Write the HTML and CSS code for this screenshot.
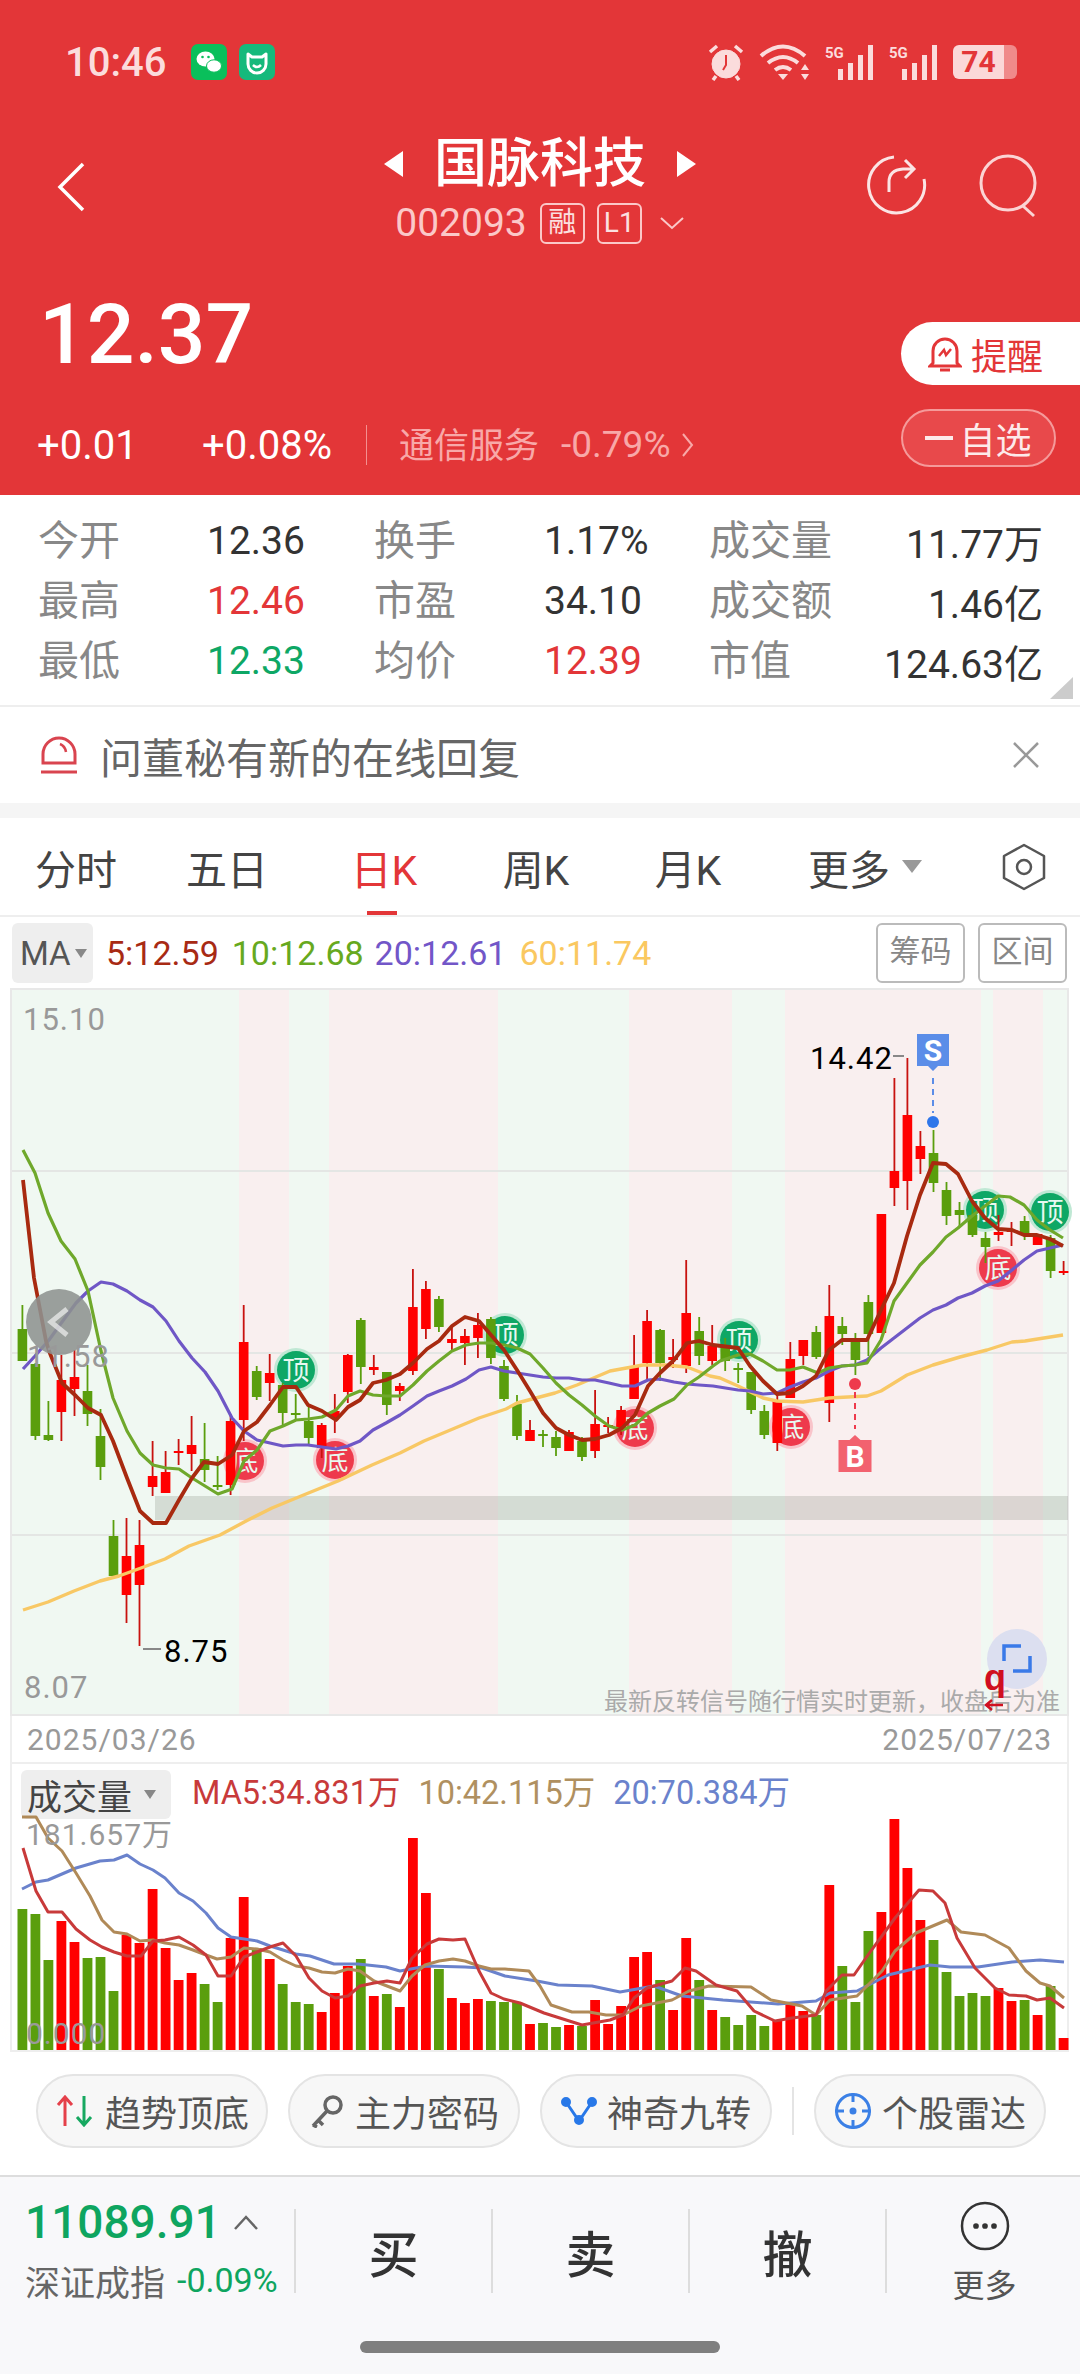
FILE: index.html
```html
<!DOCTYPE html>
<html>
	<head>
		<meta charset="utf-8" />
		<title>国脉科技</title>
		<link rel="stylesheet" href="styles.css">
	</head>
	<body>
		<div class="page">
			<div class="top">
				<div class="status">
					<span class="clock">10:46</span>
					<svg class="app-ico" width="36" height="36" viewBox="0 0 36 36"><rect width="36" height="36" rx="7" fill="#0abf5b"/><ellipse cx="14.5" cy="15" rx="9" ry="7.5" fill="#fff"/><ellipse cx="23" cy="22" rx="7.5" ry="6.2" fill="#fff" stroke="#0abf5b"/><circle cx="11.5" cy="13" r="1.3" fill="#0abf5b"/><circle cx="17.5" cy="13" r="1.3" fill="#0abf5b"/></svg>
					<svg class="app-ico" width="36" height="36" viewBox="0 0 36 36"><rect width="36" height="36" rx="7" fill="#16b97c"/><path d="M9 10l4 3h10l4-3v10a9 9 0 0 1-18 0z" fill="none" stroke="#fff" stroke-width="3" stroke-linejoin="round"/><path d="M14 21q4 4 8 0" fill="none" stroke="#fff" stroke-width="2.5"/></svg>
					<div class="status-right">
						<svg width="38" height="38" viewBox="0 0 38 38" fill="none" stroke="#fbdcdc"><circle cx="19" cy="21" r="14" fill="#fbdcdc"/><path d="M19 12v10l-3 5" stroke="#e33638" stroke-width="2"/><path d="M3 9l7-6M35 9l-7-6M9 33l-3 4M29 33l3 4" stroke-width="3.5"/></svg>
						<svg width="52" height="36" viewBox="0 0 52 36" fill="none" stroke="#fbdcdc" stroke-width="4"><path d="M2 12q22-19 44 0M9 19q15-12 30 0M16 26q8-6 16 0"/><path d="M24 36l-5-6h10z" fill="#fbdcdc" stroke="none"/><path d="M46 20l-4 6h8zM46 36l-4-6h8z" fill="#fbdcdc" stroke="none"/></svg>
						<svg class="sig" width="50" height="36" viewBox="0 0 50 36"><text class="sig-text" x="0" y="14">5G</text><path d="M13 25h5v11h-5zM23 19h5v17h-5zM33 11h5v25h-5zM43 1h5v35h-5z" fill="#fbdcdc"/></svg>
						<svg class="sig" width="50" height="36" viewBox="0 0 50 36"><text class="sig-text" x="0" y="14">5G</text><path d="M13 25h5v11h-5zM23 19h5v17h-5zM33 11h5v25h-5zM43 1h5v35h-5z" fill="#fbdcdc"/></svg>
						<div class="battery"><span class="battery-fill">74</span><i class="battery-rest"></i></div>
					</div>
				</div>
				<div class="nav">
					<div>
						<svg class="back" width="30" height="50" viewBox="0 0 30 50" fill="none" stroke="#fff" stroke-width="3.5"><path d="M27 2L4 25l23 23"/></svg>
					</div>
					<div class="title-box">
						<div class="title-line"><i class="tri-left"></i><span class="title">国脉科技</span><i class="tri-right"></i></div>
						<div class="code-line">
							<span class="code">002093</span>
							<span class="tag">融</span>
							<span class="tag tag-wide">L1</span>
							<svg width="26" height="14" viewBox="0 0 26 14" fill="none" stroke="#fbc8c8" stroke-width="2"><path d="M2 2l11 10L24 2"/></svg>
						</div>
					</div>
					<div class="nav-icons">
						<svg width="60" height="62" viewBox="0 0 60 62" fill="none" stroke="#fbe4e4" stroke-width="3"><path d="M27 3a28 28 0 1 0 30 22"/><path d="M22 38V28q0-12 14-13h10M38 6l9 9-9 9"/></svg>
						<svg width="60" height="64" viewBox="0 0 60 64" fill="none" stroke="#fbd4d4" stroke-width="3"><circle cx="29" cy="29" r="27"/><path d="M44 52l11 10"/></svg>
					</div>
				</div>
				<div class="quote">
					<div>
						<div class="price">12.37</div>
						<div class="change">
							<span class="change-a">+0.01</span>
							<span class="change-b">+0.08%</span>
							<i class="change-sep"></i>
							<span class="sector">通信服务</span>
							<span class="sector-pct">-0.79%</span>
							<svg width="13" height="26" viewBox="0 0 13 26" fill="none" stroke="#f8a8a8" stroke-width="2"><path d="M2 2l9 11-9 11"/></svg>
						</div>
					</div>
					<div class="quote-btns">
						<div class="remind">
							<svg width="34" height="36" viewBox="0 0 34 36" fill="none" stroke="#e33638" stroke-width="3"><path d="M5 27V15a12 12 0 0 1 24 0v12l3 3H2z"/><path d="M12 34h10" stroke-width="3"/><path d="M11 20l5-6 2 5 5-6" stroke-width="2.5"/></svg>
							<span>提醒</span>
						</div>
						<div class="watch"><i class="watch-dash"></i>自选</div>
					</div>
				</div>
			</div>

			<div class="stats">
				<span class="st-label">今开</span><span class="st-val">12.36</span>
				<span class="st-label">换手</span><span class="st-val">1.17%</span>
				<span class="st-label">成交量</span><span class="st-val st-end">11.77万</span>
				<span class="st-label">最高</span><span class="st-val up">12.46</span>
				<span class="st-label">市盈</span><span class="st-val">34.10</span>
				<span class="st-label">成交额</span><span class="st-val st-end">1.46亿</span>
				<span class="st-label">最低</span><span class="st-val down">12.33</span>
				<span class="st-label">均价</span><span class="st-val up">12.39</span>
				<span class="st-label">市值</span><span class="st-val st-end">124.63亿</span>
				<i class="corner"></i>
			</div>

			<div class="notice">
				<svg width="38" height="40" viewBox="0 0 38 40" fill="none" stroke="#d9444f" stroke-width="3"><path d="M3 28V19a16 16 0 0 1 32 0v9z"/><path d="M1 37h36"/><path d="M20 9q5 2 6 8" stroke-width="2.5"/></svg>
				<span class="notice-text">问董秘有新的在线回复</span>
				<svg width="28" height="28" viewBox="0 0 28 28" fill="none" stroke="#999" stroke-width="2.5"><path d="M2 2l24 24M26 2L2 26"/></svg>
			</div>
			<div class="gap"></div>

			<div class="tabs">
				<span class="tab">分时</span>
				<span class="tab">五日</span>
				<span class="tab tab-on">日K</span>
				<span class="tab">周K</span>
				<span class="tab">月K</span>
				<span class="tab">更多<i class="tab-tri"></i></span>
				<span class="tab tab-icon">
					<svg width="44" height="48" viewBox="0 0 44 48" fill="none" stroke="#555" stroke-width="2.5"><path d="M22 2l20 11v22L22 46 2 35V13z" stroke-linejoin="round"/><circle cx="22" cy="24" r="7"/></svg>
				</span>
			</div>

			<div class="ma-row">
				<div class="ma-box">MA<i class="mini-tri"></i></div>
				<span class="ma5">5:12.59</span>
				<span class="ma10">10:12.68</span>
				<span class="ma20">20:12.61</span>
				<span class="ma60">60:11.74</span>
				<span class="ma-btn ma-btn-first">筹码</span>
				<span class="ma-btn">区间</span>
			</div>

			<div class="kline" id="kline"></div>

			<div class="dates">
				<span>2025/03/26</span>
				<span>2025/07/23</span>
			</div>

			<div class="vol-head">
				<div class="vol-box">成交量<i class="mini-tri"></i></div>
				<span class="v5">MA5:34.831万</span>
				<span class="v10">10:42.115万</span>
				<span class="v20">20:70.384万</span>
			</div>
			<div class="vol" id="vol"></div>

			<div class="tools">
				<div class="pill">
					<svg width="40" height="32" viewBox="0 0 40 32" fill="none" stroke-width="3"><path d="M10 31V3M3 10l7-8 7 8" stroke="#e5404a"/><path d="M29 1v28M22 22l7 8 7-8" stroke="#16a860"/></svg>
					<span>趋势顶底</span>
				</div>
				<div class="pill">
					<svg width="36" height="34" viewBox="0 0 36 34" fill="none" stroke="#666" stroke-width="3.5"><circle cx="24" cy="11" r="8"/><path d="M18 17L4 32M9 26l5 5M4 31l4 2"/></svg>
					<span>主力密码</span>
				</div>
				<div class="pill">
					<svg width="36" height="30" viewBox="0 0 36 30" fill="#2878e8" stroke="#2878e8" stroke-width="3"><path d="M5 6l13 19L31 6" fill="none"/><circle cx="5" cy="6" r="3.5"/><circle cx="31" cy="6" r="3.5"/><circle cx="18" cy="24" r="3.5"/></svg>
					<span>神奇九转</span>
				</div>
				<i class="tools-sep"></i>
				<div class="pill">
					<svg width="38" height="38" viewBox="0 0 38 38" fill="none" stroke="#3b80e6" stroke-width="3"><circle cx="19" cy="19" r="16.5"/><path d="M19 1v9M19 28v9M1 19h9M28 19h9"/><circle cx="19" cy="19" r="2" fill="#3b80e6"/></svg>
					<span>个股雷达</span>
				</div>
			</div>

			<div class="bottom">
				<div class="bottom-row">
					<div class="index">
						<div class="index-top">
							<span class="index-num">11089.91</span>
							<svg width="26" height="15" viewBox="0 0 26 15" fill="none" stroke="#666" stroke-width="2.5"><path d="M2 14L13 2l11 12"/></svg>
						</div>
						<div class="index-sub"><span>深证成指</span><span class="index-pct">-0.09%</span></div>
					</div>
					<div class="trade">买</div>
					<div class="trade">卖</div>
					<div class="trade">撤</div>
					<div class="trade more">
						<svg width="50" height="50" viewBox="0 0 50 50" fill="none" stroke="#333" stroke-width="2.5"><circle cx="25" cy="25" r="23"/><circle cx="16" cy="25" r="1.6" fill="#333"/><circle cx="25" cy="25" r="1.6" fill="#333"/><circle cx="34" cy="25" r="1.6" fill="#333"/></svg>
						<span>更多</span>
					</div>
				</div>
				<div class="home-bar"></div>
			</div>
		</div>
		<script src="chart.js"></script>
	</body>
</html>
```

FILE: styles.css
```css
*{
	margin: 0;
	padding: 0;
	box-sizing: border-box;
}
body{
	width: 1080px;
	background: #fff;
	font-family: Roboto, "Noto Sans CJK SC", sans-serif;
}
i{
	display: block;
	font-style: normal;
}
.page{
	width: 1080px;
	height: 2376px;
	overflow: hidden;
}

/* red header */
.top{
	height: 495px;
	background: #e33638;
	color: #fff;
}
.status{
	height: 124px;
	display: flex;
	align-items: center;
	padding: 0 63px 0 65px;
}
.clock{
	font-size: 40px;
	font-weight: 500;
	color: #fbdcdc;
	margin-right: 25px;
}
.app-ico{
	margin-right: 12px;
}
.status-right{
	margin-left: auto;
	display: flex;
	align-items: center;
	gap: 14px;
}
.sig{
	overflow: visible;
}
.sig-text{
	font-size: 15px;
	font-weight: 700;
	fill: #fbdcdc;
}
.battery{
	display: flex;
	align-items: stretch;
	height: 34px;
}
.battery-fill{
	width: 51px;
	background: #fbd8d8;
	border-radius: 6px 0 0 6px;
	color: #e33638;
	font-size: 30px;
	font-weight: 700;
	line-height: 34px;
	text-align: center;
}
.battery-rest{
	width: 13px;
	background: #f08a8a;
	border-radius: 0 6px 6px 0;
}
.nav{
	height: 126px;
	display: grid;
	grid-template-columns: 1fr auto 1fr;
	padding: 0 41px;
}
.back{
	margin: 38px 0 0 15px;
}
.title-box{
	display: flex;
	flex-direction: column;
	align-items: center;
}
.title-line{
	height: 78px;
	display: flex;
	align-items: center;
	gap: 31px;
	padding-top: 2px;
}
.title{
	font-size: 53px;
	font-weight: 500;
	line-height: 76px;
}
.tri-left{
	border: 13px solid transparent;
	border-left-width: 0;
	border-right: 19px solid #fff;
}
.tri-right{
	border: 13px solid transparent;
	border-right-width: 0;
	border-left: 19px solid #fff;
}
.code-line{
	display: flex;
	align-items: center;
	color: #fbc8c8;
}
.code{
	font-size: 39px;
	line-height: 42px;
	margin-right: 13px;
}
.tag{
	width: 45px;
	height: 41px;
	border: 2px solid #fbc8c8;
	border-radius: 6px;
	font-size: 28px;
	line-height: 36px;
	text-align: center;
	margin-right: 12px;
	color: #fbe0e0;
}
.tag-wide{
	margin-right: 17px;
}
.nav-icons{
	display: flex;
	justify-content: flex-end;
	gap: 52px;
	padding-top: 30px;
}
.quote{
	height: 245px;
	display: flex;
	justify-content: space-between;
	padding-left: 37px;
}
.price{
	font-size: 84px;
	font-weight: 500;
	line-height: 100px;
	margin-top: 35px;
	margin-left: 2px;
}
.change{
	display: flex;
	align-items: center;
	height: 50px;
	margin-top: 35px;
	font-size: 40px;
}
.change-a{
	width: 165px;
}
.change-b{
	width: 164px;
}
.change-sep{
	width: 1px;
	height: 40px;
	background: #f39090;
	margin-right: 32px;
}
.sector{
	color: #f8a8a8;
	font-size: 35px;
	margin-right: 22px;
	margin-top: -6px;
}
.sector-pct{
	color: #f8a8a8;
	font-size: 37px;
	margin-right: 11px;
	margin-top: -2px;
}
.quote-btns{
	width: 179px;
	padding-top: 72px;
}
.remind{
	height: 63px;
	background: #fff;
	border-radius: 32px 0 0 32px;
	display: flex;
	align-items: center;
	padding-left: 27px;
	gap: 9px;
	color: #e33638;
	font-size: 36px;
}
.watch{
	width: 155px;
	height: 58px;
	margin-top: 24px;
	border: 2px solid #f59a9a;
	border-radius: 29px;
	background: #e8494b;
	display: flex;
	align-items: center;
	justify-content: center;
	gap: 2px;
	font-size: 36px;
	color: #fdeaea;
}
.watch-dash{
	width: 28px;
	height: 4px;
	margin-right: 4px;
	background: #fdeaea;
}

/* quote table */
.stats{
	position: relative;
	height: 212px;
	padding: 16px 37px 0 38px;
	display: grid;
	grid-template-columns: 169px 167px 170px 165px auto 1fr;
	grid-auto-rows: 60px;
	align-items: center;
	border-bottom: 2px solid #eee;
}
.st-label{
	color: #888;
	font-size: 41px;
	line-height: 56px;
}
.st-val{
	color: #333;
	font-size: 39px;
}
.st-end{
	text-align: right;
}
.up{
	color: #e33638;
}
.down{
	color: #0ea765;
}
.corner{
	position: absolute;
	right: 7px;
	bottom: 6px;
	width: 23px;
	height: 22px;
	background: #ccc;
	clip-path: polygon(100% 0, 100% 100%, 0 100%);
}

/* notice */
.notice{
	height: 96px;
	display: flex;
	align-items: center;
	padding: 0 40px;
}
.notice-text{
	flex: 1;
	margin-left: 22px;
	color: #666;
	font-size: 42px;
}
.gap{
	height: 15px;
	background: #f5f5f5;
}

/* tabs */
.tabs{
	height: 99px;
	display: grid;
	grid-template-columns: 152px 150px 164px 140px 164px 190px 1fr;
	align-items: center;
	border-bottom: 2px solid #eee;
}
.tab{
	position: relative;
	height: 97px;
	display: flex;
	align-items: center;
	justify-content: center;
	color: #444;
	font-size: 41px;
}
.tab-icon{
	padding-left: 8px;
}
.tab-on{
	color: #e33638;
}
.tab-on::after{
	content: "";
	position: absolute;
	left: 65px;
	bottom: 0;
	width: 30px;
	height: 4px;
	background: #e33638;
}
.tab-tri{
	margin: 0 0 0 12px;
	border: 10px solid transparent;
	border-top: 13px solid #999;
	border-bottom-width: 0;
}

/* MA row */
.ma-row{
	height: 71px;
	display: flex;
	align-items: center;
	padding: 1px 13px 0 12px;
	font-size: 34px;
}
.ma-box{
	width: 81px;
	height: 60px;
	background: #eee;
	border-radius: 6px;
	display: flex;
	align-items: center;
	padding-left: 8px;
	margin-right: 13px;
	color: #555;
	font-size: 33px;
}
.mini-tri{
	margin-left: 4px;
	border: 6px solid transparent;
	border-top: 9px solid #888;
	border-bottom-width: 0;
}
.ma5{
	color: #a82a14;
	margin-right: 13px;
}
.ma10{
	color: #67a91e;
	margin-right: 11px;
}
.ma20{
	color: #7256c8;
	margin-right: 13px;
}
.ma60{
	color: #fac860;
}
.ma-btn{
	width: 89px;
	height: 60px;
	border: 2px solid #bbb;
	border-radius: 6px;
	color: #888;
	font-size: 31px;
	line-height: 54px;
	text-align: center;
	margin-left: 13px;
}
.ma-btn-first{
	margin-left: auto;
}

/* charts */
.kline{
	height: 728px;
}
.kline svg, .vol svg{
	display: block;
	overflow: visible;
}
.axis{
	font-size: 31px;
	fill: #999;
	letter-spacing: 1px;
}
.extreme{
	font-size: 31px;
	fill: #000;
	letter-spacing: 1px;
}
.badge-text{
	font-family: "Noto Sans CJK SC", sans-serif;
	font-size: 27px;
	fill: #e8f8f0;
	text-anchor: middle;
}
.pin-text{
	font-size: 30px;
	font-weight: 700;
	fill: #fff;
	text-anchor: middle;
}
.tip{
	font-size: 24px;
	fill: #aaa;
}
.q-mark{
	font-family: "Liberation Sans", sans-serif;
	font-size: 36px;
	font-weight: 700;
	fill: #d01020;
}
.dates{
	height: 48px;
	margin: 0 11px 0 10px;
	padding: 0 15px 0 15px;
	display: flex;
	align-items: center;
	justify-content: space-between;
	border: 2px solid #eee;
	border-top: 0;
	color: #999;
	font-size: 30px;
	letter-spacing: 1px;
}
.vol-head{
	height: 56px;
	margin: 0 11px 0 10px;
	padding-left: 9px;
	display: flex;
	align-items: flex-start;
	border-left: 2px solid #eee;
	border-right: 2px solid #eee;
	font-size: 32.5px;
}
.vol-head span{
	line-height: 48px;
	margin-top: 5px;
}
.vol-box{
	width: 150px;
	height: 49px;
	margin-top: 6px;
	padding-left: 6px;
	background: #eee;
	border-radius: 6px;
	display: flex;
	align-items: center;
	color: #444;
	font-size: 35px;
}
.vol-box .mini-tri{
	margin-left: 12px;
}
.v5{
	margin-left: 21px;
	color: #c83a3a;
}
.v10{
	margin-left: 18px;
	color: #b09060;
}
.v20{
	margin-left: 18px;
	color: #6a82cc;
}
.vol{
	height: 232px;
}
.vol-line{
	font-size: 30px;
	fill: #999;
	letter-spacing: 1px;
}

/* tool pills */
.tools{
	height: 123px;
	display: flex;
	align-items: center;
	gap: 20px;
	padding: 0 0 6px 36px;
}
.pill{
	width: 232px;
	height: 74px;
	background: #f7f7f7;
	border: 2px solid #e4e4e4;
	border-radius: 37px;
	display: flex;
	align-items: center;
	justify-content: center;
	gap: 10px;
	color: #555;
	font-size: 36px;
}
.tools-sep{
	width: 2px;
	height: 48px;
	background: #e4e4e4;
}

/* bottom bar */
.bottom{
	height: 199px;
	background: #f8f8fa;
	border-top: 2px solid #ddd;
	padding-top: 32px;
}
.bottom-row{
	display: flex;
	height: 84px;
}
.index{
	width: 294px;
	padding-left: 25px;
}
.index-top{
	display: flex;
	align-items: center;
	height: 46px;
	margin-top: -10px;
}
.index-num{
	color: #0ea560;
	font-size: 46px;
	font-weight: 500;
	margin-right: 12px;
}
.index-sub{
	display: flex;
	align-items: center;
	height: 40px;
	margin-top: 15px;
	color: #666;
	font-size: 35px;
}
.index-pct{
	margin-left: 12px;
	color: #0ea560;
	font-size: 34px;
}
.trade{
	width: 197px;
	border-left: 2px solid #ddd;
	display: flex;
	align-items: center;
	justify-content: center;
	color: #333;
	font-size: 50px;
	font-weight: 500;
}
.more{
	flex-direction: column;
	justify-content: flex-start;
	margin-right: -4px;
	font-weight: 400;
	font-size: 32px;
	color: #555;
}
.more svg{
	margin-top: -8px;
	flex: none;
}
.more span{
	margin-top: 15px;
	line-height: 40px;
}
.home-bar{
	width: 360px;
	height: 12px;
	margin: 48px auto 0;
	background: #7f7f7f;
	border-radius: 6px;
}
```

FILE: chart.js
```js
// candle slots are 13px wide, all y values are page pixels
var X0 = 22.4, STEP = 13.015;
var UP = "#ff0000", UPW = "#c8120f", DN = "#5a9e0d";

// [red?, wick top, body top, body bottom, wick bottom]
var candles = [
	[0,1307,1331,1363,1363],[0,1365,1366,1438,1442],[0,1403,1437,1442,1443],[1,1357,1382,1414,1443],
	[1,1352,1379,1391,1418],[0,1367,1393,1416,1428],[0,1411,1438,1469,1482],[0,1522,1538,1578,1578],
	[1,1520,1558,1597,1625],[1,1522,1547,1587,1648],[1,1443,1478,1489,1498],[1,1453,1474,1495,1495],
	[1,1441,1453,1455,1467],[1,1418,1447,1456,1473],[0,1425,1461,1472,1484],[0,1458,1487,1488,1492],
	[1,1416,1423,1487,1497],[1,1307,1344,1422,1443],[0,1368,1373,1399,1402],[1,1356,1375,1385,1403],
	[0,1385,1387,1415,1427],[0,1396,1415,1417,1422],[0,1408,1423,1440,1446],[1,1425,1427,1450,1460],
	[1,1396,1413,1420,1435],[1,1356,1357,1394,1405],[0,1320,1322,1369,1386],[1,1357,1369,1372,1377],
	[0,1374,1374,1407,1417],[1,1385,1388,1393,1403],[1,1271,1309,1373,1377],[1,1283,1291,1331,1341],
	[0,1298,1301,1329,1334],[1,1327,1341,1345,1352],[1,1331,1338,1345,1367],[1,1315,1327,1340,1360],
	[0,1319,1321,1360,1366],[0,1362,1368,1401,1403],[0,1397,1406,1438,1442],[1,1422,1432,1443,1443],
	[0,1432,1436,1438,1449],[0,1433,1439,1450,1458],[1,1432,1434,1453,1453],[0,1439,1443,1459,1463],
	[1,1392,1426,1453,1460],[1,1419,1427,1429,1435],[1,1408,1412,1430,1437],[1,1337,1368,1401,1401],
	[1,1312,1323,1365,1382],[0,1331,1332,1365,1383],[1,1341,1359,1362,1370],[1,1262,1315,1368,1375],
	[0,1319,1333,1358,1367],[1,1327,1348,1363,1367],[0,1340,1347,1363,1373],[0,1365,1370,1372,1385],
	[0,1374,1374,1412,1416],[0,1407,1413,1437,1441],[1,1395,1403,1445,1453],[1,1344,1361,1400,1400],
	[1,1342,1342,1358,1367],[0,1328,1334,1359,1361],[1,1287,1318,1405,1424],[0,1319,1328,1336,1347],
	[0,1335,1342,1362,1377],[0,1297,1304,1336,1358],[1,1216,1216,1335,1335],[1,1080,1173,1190,1208],
	[1,1060,1117,1183,1212],[1,1133,1148,1161,1176],[0,1132,1155,1185,1194],[0,1184,1192,1218,1227],
	[0,1204,1212,1217,1228],[0,1205,1217,1237,1239],[0,1234,1240,1249,1265],[1,1217,1234,1237,1243],
	[1,1224,1232,1233,1248],[0,1218,1223,1237,1242],[1,1236,1236,1247,1247],[0,1237,1240,1273,1280],
	[1,1263,1273,1274,1277]
];

var ma5 = [23,1182,34,1280,46,1343,49,1353,62,1385,76,1398,88,1410,101,1417,113,1443,127,1480,140,1513,153,1525,166,1525,179,1502,192,1480,204,1464,218,1466,232,1457,244,1433,257,1424,270,1407,283,1389,296,1389,308,1407,322,1413,336,1422,348,1409,360,1402,373,1385,386,1382,400,1376,413,1365,427,1351,439,1343,452,1328,465,1319,479,1323,491,1337,504,1352,517,1372,530,1393,543,1415,556,1430,569,1437,582,1442,595,1441,609,1437,622,1430,635,1417,648,1388,660,1375,674,1362,687,1345,699,1343,713,1347,738,1350,750,1368,763,1383,777,1396,790,1395,803,1388,816,1378,829,1352,842,1342,867,1342,881,1312,894,1285,907,1238,920,1197,933,1165,946,1166,958,1176,972,1203,985,1220,998,1231,1012,1232,1024,1237,1037,1237,1050,1241,1063,1248];
var ma10 = [23,1152,35,1175,48,1215,61,1243,75,1261,88,1293,101,1353,113,1400,127,1433,140,1455,153,1467,166,1470,179,1471,192,1480,205,1488,218,1496,232,1491,244,1463,257,1452,270,1433,283,1428,296,1422,308,1421,322,1419,336,1412,348,1398,360,1393,373,1397,386,1398,400,1398,413,1387,427,1373,439,1363,452,1353,466,1347,479,1345,491,1345,504,1347,517,1350,530,1356,543,1370,556,1385,569,1397,582,1407,595,1418,609,1428,622,1432,635,1427,648,1415,660,1408,674,1401,687,1387,699,1379,713,1368,720,1363,738,1357,750,1356,763,1363,777,1372,790,1372,803,1369,818,1375,829,1370,842,1368,855,1367,867,1365,881,1342,894,1303,907,1285,920,1267,933,1254,946,1239,958,1230,972,1218,985,1208,998,1198,1010,1199,1024,1207,1037,1222,1050,1232,1063,1240];
var ma20 = [23,1371,35,1358,49,1342,62,1324,76,1305,88,1293,101,1284,113,1286,127,1293,140,1302,153,1309,166,1323,179,1343,192,1360,205,1374,218,1393,232,1420,244,1433,257,1442,270,1445,283,1448,296,1447,308,1447,322,1449,336,1451,348,1448,360,1443,373,1432,386,1425,400,1417,413,1408,427,1398,439,1393,452,1388,466,1381,479,1372,491,1369,504,1373,517,1375,530,1377,543,1379,556,1380,569,1380,582,1382,595,1382,609,1385,622,1388,635,1388,648,1382,660,1381,674,1384,687,1386,699,1387,713,1388,738,1392,750,1393,763,1396,777,1395,790,1389,803,1384,816,1380,829,1373,842,1368,855,1367,867,1362,881,1350,894,1340,907,1330,920,1320,933,1312,946,1307,958,1300,972,1295,985,1288,998,1283,1012,1272,1024,1262,1037,1253,1063,1247];
var ma60 = [23,1612,48,1604,74,1593,100,1583,119,1578,141,1570,165,1561,189,1548,220,1537,248,1522,272,1510,306,1496,338,1483,372,1467,400,1455,424,1443,448,1433,479,1420,506,1411,517,1405,555,1395,577,1387,610,1373,643,1367,665,1367,687,1369,710,1378,720,1380,738,1388,763,1400,777,1403,803,1404,829,1400,867,1398,881,1393,907,1377,933,1367,960,1359,987,1352,1012,1344,1025,1343,1063,1337];

var volTops = [
	[0,1911],[0,1916],[0,1962],[1,1923],[1,1944],[0,1960],[0,1959],[0,1993],[1,1937],[1,1945],
	[1,1891],[1,1950],[1,1982],[1,1975],[0,1986],[0,2004],[1,1940],[1,1899],[0,1950],[1,1961],
	[0,1986],[0,2004],[0,2006],[1,2014],[1,1995],[1,1968],[0,1961],[1,1998],[0,1996],[1,2009],
	[1,1840],[1,1895],[0,1971],[1,2000],[1,2005],[1,2001],[0,2003],[0,2004],[0,2004],[1,2026],
	[0,2025],[0,2029],[1,2027],[0,2028],[1,2002],[1,2026],[1,2008],[1,1959],[1,1954],[0,1982],
	[1,2012],[1,1940],[0,1982],[1,2012],[0,2019],[0,2027],[0,2017],[0,2028],[1,2023],[1,2005],
	[1,2013],[0,2017],[1,1887],[0,1968],[0,2004],[0,1933],[1,1914],[1,1821],[1,1870],[1,1922],
	[0,1942],[0,1974],[0,1998],[0,1995],[0,1998],[1,1990],[1,2003],[0,2002],[1,2017],[0,1988],[1,2040]
];
var volMa5 = [23,1850,36,1893,48,1914,62,1914,76,1931,90,1942,102,1949,114,1954,127,1958,141,1958,153,1943,165,1942,179,1939,193,1947,206,1957,218,1978,231,1978,244,1959,257,1954,270,1949,283,1945,296,1958,309,1980,322,1993,335,2000,348,1998,360,1988,374,1985,387,1983,400,1985,412,1960,427,1946,439,1941,453,1942,465,1941,479,1973,491,1995,504,2001,520,2005,544,2015,582,2027,610,2022,623,2017,634,2000,647,1990,672,1983,685,1970,696,1973,716,1987,737,1993,754,2013,775,2023,792,2020,816,2017,826,1993,842,1977,854,1977,868,1957,895,1920,919,1892,933,1893,945,1905,957,1940,975,1970,995,1990,1009,1997,1026,1998,1037,2002,1050,2000,1064,2010];
var volMa10 = [22,1819,36,1819,48,1840,62,1853,76,1875,90,1898,102,1922,114,1934,127,1936,140,1943,153,1942,165,1945,179,1947,193,1952,206,1957,217,1961,231,1959,244,1950,257,1951,270,1954,283,1962,296,1968,309,1970,322,1974,335,1975,348,1971,360,1973,374,1983,387,1988,400,1993,412,1978,425,1967,439,1963,453,1961,465,1963,479,1968,491,1971,505,1971,529,1973,540,1988,551,2007,572,2014,589,2014,606,2017,623,2017,641,2008,672,2002,689,1993,709,1988,751,1989,771,2002,802,2008,816,2017,830,2002,857,1998,882,1973,895,1953,916,1935,947,1922,961,1934,985,1937,1009,1950,1026,1973,1040,1985,1050,1988,1064,2000];
var volMa20 = [22,1891,36,1884,48,1882,76,1870,100,1863,114,1862,127,1857,140,1866,153,1872,165,1880,179,1895,193,1903,206,1915,218,1930,231,1939,257,1943,270,1948,296,1956,310,1958,334,1966,358,1966,386,1969,400,1973,427,1968,465,1969,482,1970,505,1978,537,1983,558,1987,592,1988,620,1994,654,1988,682,1998,723,2002,778,2006,816,2003,830,1995,857,1993,888,1977,930,1967,950,1969,978,1969,1012,1964,1040,1962,1064,1964];

function cx(i){
	return (X0 + STEP * i).toFixed(1);
}
function rect(x, y, w, h, fill, extra){
	return '<rect x="' + x + '" y="' + y + '" width="' + w + '" height="' + h + '" fill="' + fill + '"' + (extra || "") + '/>';
}
function line(pts, color, width){
	var s = "";
	for(var i = 0; i < pts.length; i += 2){
		s += pts[i] + "," + pts[i + 1] + " ";
	}
	return '<polyline points="' + s + '" fill="none" stroke="' + color + '" stroke-width="' + width + '" stroke-linejoin="round"/>';
}
function badge(x, y, word, fill, halo){
	return '<circle cx="' + x + '" cy="' + y + '" r="22" fill="' + halo + '"/>'
		+ '<circle cx="' + x + '" cy="' + y + '" r="19" fill="' + fill + '"/>'
		+ '<text class="badge-text" x="' + x + '" y="' + (y + 10) + '">' + word + '</text>';
}

function drawKline(){
	var s = '<svg width="1080" height="728" viewBox="0 990 1080 728">';
	s += rect(10, 990, 1059, 728, "#f0f8f2");
	var pink = [[239,50],[329,169],[629,103],[785,196],[993,50]];
	pink.forEach(function(p){
		s += rect(p[0], 990, p[1], 728, "#f9efef");
	});
	// grid and frame
	[1173, 1355, 1537].forEach(function(y){
		s += rect(10, y - 1, 1059, 2, "#e4e6e4");
	});
	s += rect(10, 990, 1059, 2, "#e8e8e8") + rect(10, 990, 2, 728, "#e8e8e8") + rect(1067, 990, 2, 728, "#e8e8e8") + rect(10, 1716, 1059, 2, "#e8e8e8");
	s += rect(155, 1498, 913, 24, "#66705f", ' opacity="0.2"');

	[[296,1372],[505,1337],[739,1342],[985,1212],[1050,1214]].forEach(function(b){
		s += badge(b[0], b[1], "顶", "#0ea765", "#bfe8d4");
	});
	[[245,1463],[335,1462],[635,1430],[791,1429],[998,1270]].forEach(function(b){
		s += badge(b[0], b[1], "底", "#ee3a4c", "#f9c4ca");
	});

	candles.forEach(function(c, i){
		var x = cx(i);
		s += rect(x - 0.9, c[1], 1.8, c[4] - c[1], c[0] ? UPW : DN);
		s += rect(x - 4.8, c[2], 9.6, Math.max(c[3] - c[2], 2), c[0] ? UP : DN);
	});

	s += line(ma60, "#f8c865", 3.4) + line(ma20, "#6f57c6", 3.2) + line(ma10, "#6fa82b", 3.2) + line(ma5, "#a82a10", 3.8);

	// S and B signal pins
	s += '<path d="M917 1036h32v32h-11l-5 5-5-5h-11z" fill="#5b8de8"/><text class="pin-text" x="933" y="1063">S</text>';
	s += '<path d="M933 1080v35" stroke="#5b8de8" stroke-width="2" stroke-dasharray="6 5"/><circle cx="933" cy="1124" r="6" fill="#2f76ea"/>';
	s += '<circle cx="855" cy="1386" r="6" fill="#ee3a4c"/><path d="M855 1394v37" stroke="#ee3a4c" stroke-width="2" stroke-dasharray="6 5"/>';
	s += '<path d="M838.5 1442h11l5.5-5 5.5 5h11v32h-33z" fill="#f2626f"/><text class="pin-text" x="855" y="1469">B</text>';

	// highs, lows and axis labels
	s += '<text class="extreme" x="810" y="1071">14.42</text>' + rect(893, 1057, 11, 2, "#888");
	s += '<text class="extreme" x="164" y="1664">8.75</text>' + rect(143, 1650, 18, 2, "#888");
	s += '<text class="axis" x="23" y="1032">15.10</text><text class="axis" x="24" y="1700">8.07</text>';

	// floating back ball sits above the chart
	s += '<circle cx="59" cy="1324" r="33" fill="#8d928f" opacity="0.88"/>';
	s += '<path d="M67 1311l-16 13 16 13" fill="none" stroke="#fff" stroke-width="5" opacity="0.6"/>';
	s += '<text class="axis" x="27" y="1369">11.58</text>';

	s += '<text class="tip" x="604" y="1712">最新反转信号随行情实时更新，收盘后为准</text>';
	s += '<circle cx="1017" cy="1661" r="30" fill="#dcdff0"/>';
	s += '<path d="M1004 1663v-15h17M1013 1673h17v-15" fill="none" stroke="#3a7ae8" stroke-width="3.5"/>';
	s += '<text class="q-mark" x="984" y="1692">q</text>';
	s += '<path d="M1003 1707h-17m6-5l-6 5 6 5" fill="none" stroke="#d01020" stroke-width="2.5"/>';
	s += "</svg>";
	document.getElementById("kline").innerHTML = s;
}

function drawVol(){
	var base = 2052;
	var s = '<svg width="1080" height="232" viewBox="0 1822 1080 232">';
	s += rect(10, 1822, 2, 232, "#eee") + rect(1067, 1822, 2, 232, "#eee") + rect(10, 2052, 1059, 2, "#eee");
	volTops.forEach(function(v, i){
		s += rect(cx(i) - 4.9, v[1], 9.8, base - v[1], v[0] ? UP : DN);
	});
	s += line(volMa20, "#6a82cc", 3) + line(volMa10, "#b08a58", 3) + line(volMa5, "#c83a3a", 3);
	s += '<text class="vol-line" x="26" y="1847">181.657万</text>';
	s += '<text class="vol-line" x="26" y="2046">0.000</text>';
	s += "</svg>";
	document.getElementById("vol").innerHTML = s;
}

drawKline();
drawVol();
```
